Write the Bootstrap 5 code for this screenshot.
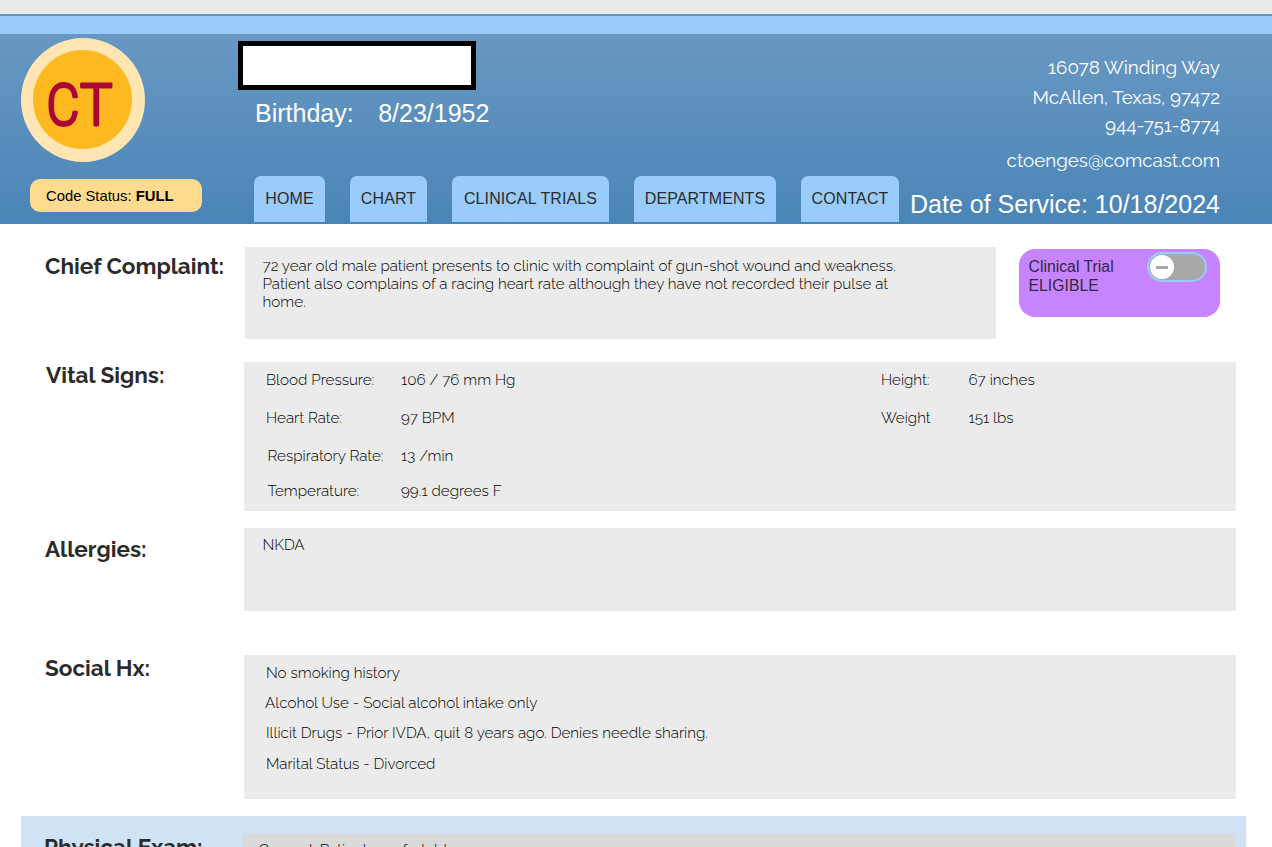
<!DOCTYPE html>
<html lang="en">
<head>
<meta charset="utf-8">
<meta name="viewport" content="width=device-width, initial-scale=1">
<title>Patient chart</title>
<link href="https://cdn.jsdelivr.net/npm/bootstrap@5.3.0/dist/css/bootstrap.min.css" rel="stylesheet">
<style>
:root{--sky:#99ccfb;--panel:#ebebeb;--ink:#2b2b2b}
html,body{height:847px;overflow:hidden}
body{background:#fff;color:#000;font:300 15.2px/18px Raleway,Lato,sans-serif}
.helv{font-family:"Liberation Sans",Arial,sans-serif;font-weight:400}
.top-strip{height:14px;background:var(--panel)}
.sky-strip{height:20px;background:var(--sky);border-top:2px solid #6797c1}
.chart-head{height:190px;background:linear-gradient(#6898c2,#4a85b7);color:#fff}
.col-id{width:238px;padding:4px 0 0 21px}
.col-mid{width:661px;padding-top:7px}
.code-status{width:172px;height:33px;margin:17px 0 0 9px;padding:1px 0 0 16px;border-radius:10px;background:#ffdb8f;color:#000;font-size:14.8px}
.name-box{width:238px;height:49px;border:5px solid #000;background:#fff}
.birth{font-size:25px;line-height:28px;margin:9px 0 0 17px;gap:24.500px}
.tabs{margin:49px 0 0 16px;gap:25px}
.tabs .nav-link{height:46px;padding:0;border-radius:7px 7px 0 0;background:var(--sky);color:var(--ink);font-size:16px;line-height:45px;text-align:center;letter-spacing:.1px}
.contact-info{padding:19px 52px 0 0;font-weight:400;font-size:18.8px;line-height:28px;white-space:nowrap}
.dos{font-size:25px;line-height:30px}
.label-col{width:244px;flex:none;padding-left:45px;font-weight:700;font-size:22.5px;line-height:28px;color:var(--ink)}
.panel{background:var(--panel);flex:none}
.wide{width:992px}
.trial{width:201px;height:68px;margin:2px 0 0 23px;padding:8px 13px 0 9.500px;border-radius:16px;background:#c685ff;color:#33263d;font-size:15.8px;line-height:19px}
.toggle{width:60px;height:30px;margin-top:-5px;padding:1px;border:2px solid var(--sky);border-radius:15px;background:#a8a8a8}
.knob{width:24px;height:24px;border-radius:50%;background:#fff}
.knob i{width:12px;height:3px;background:#a8a8a8}
.exam{margin:17px 0 0 21px;width:1225px;height:31px;background:#d0e3f5}
</style>
</head>
<body>
<div class="top-strip"></div>
<div class="sky-strip"></div>
<header class="chart-head d-flex">
  <div class="col-id">
    <svg class="d-block" width="124" height="124" viewBox="0 0 124 124">
      <circle cx="62" cy="62" r="62" fill="#ffe6b3"/>
      <circle cx="61.5" cy="61.5" r="49.5" fill="#feb820"/>
      <g font-family="Roboto, sans-serif" font-size="58" font-weight="300" fill="#ab0635" stroke="#ab0635" stroke-width="2.8" stroke-linejoin="round">
        <text x="25.500" y="87" textLength="33" lengthAdjust="spacingAndGlyphs">C</text>
        <text x="59" y="87" textLength="32.500" lengthAdjust="spacingAndGlyphs">T</text>
      </g>
    </svg>
    <div class="code-status helv d-flex align-items-center"><span>Code Status: <b>FULL</b></span></div>
  </div>
  <div class="col-mid">
    <div class="name-box"></div>
    <div class="birth helv d-flex"><span>Birthday:</span><span>8/23/1952</span></div>
    <nav class="tabs nav helv flex-nowrap">
      <a class="nav-link" href="#" style="width:71px">HOME</a>
      <a class="nav-link" href="#" style="width:77px">CHART</a>
      <a class="nav-link" href="#" style="width:157px">CLINICAL TRIALS</a>
      <a class="nav-link" href="#" style="width:142px">DEPARTMENTS</a>
      <a class="nav-link" href="#" style="width:98px">CONTACT</a>
    </nav>
  </div>
  <div class="contact-info flex-grow-1 text-end">
    <div>16078 Winding Way</div>
    <div style="margin-top:2px">McAllen, Texas, 97472</div>
    <div>944-751-8774</div>
    <div style="margin-top:7px">ctoenges@comcast.com</div>
    <div class="dos helv" style="margin-top:15px">Date of Service: 10/18/2024</div>
  </div>
</header>

<main>
  <section class="d-flex" style="padding-top:23px">
    <div class="label-col" style="padding-top:5px;width:245px">Chief Complaint:</div>
    <div class="panel" style="width:751px;height:92px;padding:10px 0 0 17.500px">72 year old male patient presents to clinic with complaint of gun-shot wound and weakness.<br>Patient also complains of a racing heart rate although they have not recorded their pulse at<br>home.</div>
    <div class="trial helv d-flex justify-content-between">
      <div>Clinical Trial<br>ELIGIBLE</div>
      <div class="toggle"><div class="knob d-flex align-items-center justify-content-center"><i></i></div></div>
    </div>
  </section>

  <section class="d-flex" style="margin-top:22px">
    <div class="label-col" style="padding-left:46px">Vital Signs:</div>
    <div class="panel wide d-flex" style="height:149px;margin-top:1px;padding:9px 0 0 22px">
      <div style="width:135px">
        <div style="height:38px">Blood Pressure:</div>
        <div style="height:38px">Heart Rate:</div>
        <div style="height:35px;padding-left:1.500px">Respiratory Rate:</div>
        <div style="padding-left:1.500px">Temperature:</div>
      </div>
      <div style="width:480px">
        <div style="height:38px">106 / 76 mm Hg</div>
        <div style="height:38px">97 BPM</div>
        <div style="height:35px">13 /min</div>
        <div>99.1 degrees F</div>
      </div>
      <div style="width:87.500px">
        <div style="height:38px">Height:</div>
        <div>Weight</div>
      </div>
      <div>
        <div style="height:38px">67 inches</div>
        <div>151 lbs</div>
      </div>
    </div>
  </section>

  <section class="d-flex" style="margin-top:17px">
    <div class="label-col" style="padding-top:7px">Allergies:</div>
    <div class="panel wide" style="height:83px;padding:8px 0 0 18.500px">NKDA</div>
  </section>

  <section class="d-flex" style="margin-top:43px">
    <div class="label-col">Social Hx:</div>
    <div class="panel wide" style="height:144px;margin-top:1px;padding:9px 0 0 22px">
      <div style="height:30px">No smoking history</div>
      <div style="height:30px;margin-left:-1px">Alcohol Use - Social alcohol intake only</div>
      <div style="height:31px">Illicit Drugs - Prior IVDA, quit 8 years ago. Denies needle sharing.</div>
      <div>Marital Status - Divorced</div>
    </div>
  </section>

  <section class="exam d-flex">
    <div class="label-col" style="width:221px;padding:17px 0 0 23px">Physical Exam:</div>
    <div class="panel" style="width:993px;margin-top:18px;padding:7px 0 0 16.500px;background:#dadada">General: Patient comfortable</div>
  </section>
</main>
<script src="https://cdn.jsdelivr.net/npm/bootstrap@5.3.0/dist/js/bootstrap.bundle.min.js"></script>
</body>
</html>
